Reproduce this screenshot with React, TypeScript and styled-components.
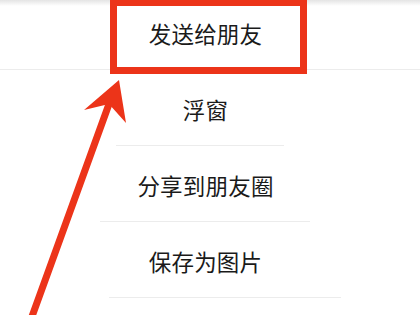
import styled, { createGlobalStyle } from "styled-components";

const GlobalStyle = createGlobalStyle`
  html, body {
    margin: 0;
    padding: 0;
    background: #ffffff;
  }
  body {
    font-family: "Noto Sans CJK SC", "Noto Sans", sans-serif;
  }
`;

interface MenuItem {
  label: string;
  rule: number; // width of the divider under the row, 0 = full width
  shift: number; // horizontal offset of the divider centre
}

const items: MenuItem[] = [
  { label: "发送给朋友", rule: 0, shift: 0 },
  { label: "浮窗", rule: 168, shift: -10 },
  { label: "分享到朋友圈", rule: 210, shift: -5 },
  { label: "保存为图片", rule: 232, shift: 15 },
];

const RED = "#ec3419";

const App = () => {
  return (
    <>
      <GlobalStyle />
      <Stage>
        <TopShade />
        <Menu>
          {items.map((item) => (
            <Row key={item.label}>
              <Label>{item.label}</Label>
              <Divider $width={item.rule} $shift={item.shift} />
            </Row>
          ))}
        </Menu>

        <HighlightBox />
        <ArrowLayer viewBox="0 0 420 315" width="420" height="315">
          <line
            x1="109"
            y1="104"
            x2="30"
            y2="322"
            stroke={RED}
            strokeWidth="7"
            strokeLinecap="round"
          />
          <polygon points="119,80 84,110 109,104 126,123" fill={RED} />
        </ArrowLayer>
      </Stage>
    </>
  );
};

export default App;

const Stage = styled.div`
  position: relative;
  width: 420px;
  height: 315px;
  overflow: hidden;
  background: #ffffff;
`;

const TopShade = styled.div`
  position: absolute;
  top: 0;
  left: 0;
  right: 0;
  height: 6px;
  background: linear-gradient(#e4e4e4, rgba(255, 255, 255, 0));
`;

const Menu = styled.div`
  display: flex;
  flex-direction: column;
  margin-top: -5px;
`;

const Row = styled.div`
  height: 76px;
  display: flex;
  flex-direction: column;
  align-items: center;
  justify-content: flex-end;
`;

const Label = styled.div`
  flex: 1;
  display: flex;
  align-items: center;
  justify-content: center;
  padding-top: 1px;
  padding-right: 9px;
  font-size: 22.5px;
  color: #1a1a1a;
  letter-spacing: 0.2px;
`;

const Divider = styled.div<{ $width: number; $shift: number }>`
  width: ${(p) => (p.$width ? `${p.$width}px` : "100%")};
  height: 1px;
  margin-left: ${(p) => p.$shift * 2}px;
  margin-bottom: 1px;
  background: #ececec;
`;

const HighlightBox = styled.div`
  position: absolute;
  left: 110px;
  top: -1px;
  width: 197px;
  height: 75px;
  box-sizing: border-box;
  border: 7px solid ${RED};
`;

const ArrowLayer = styled.svg`
  position: absolute;
  left: 0;
  top: 0;
  pointer-events: none;
`;
